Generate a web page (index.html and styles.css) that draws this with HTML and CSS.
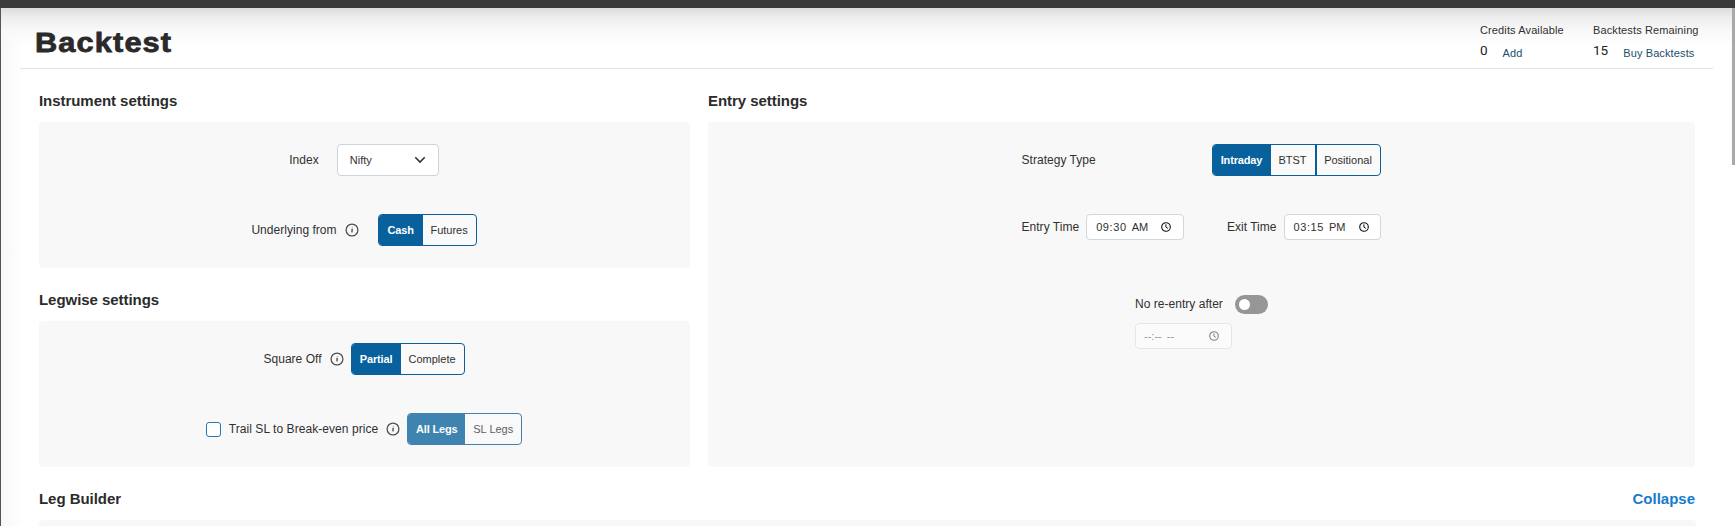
FILE: index.html
```html
<!DOCTYPE html>
<html lang="en">
<head>
<meta charset="utf-8">
<title>Backtest</title>
<link rel="stylesheet" href="styles.css">
</head>
<body>
<svg class="defs" width="0" height="0">
  <symbol id="info" viewBox="0 0 14 14"><circle cx="7" cy="7" r="5.9" fill="none" stroke="#505050" stroke-width="1.3"/><path d="M7.2 5.8L6.9 9.4" stroke="#444" stroke-width="1.3"/><path d="M6.8 4.4h1" stroke="#aaa" stroke-width="1"/></symbol>
  <symbol id="clock" viewBox="0 0 10 10"><circle cx="5" cy="5" r="4.3" fill="none" stroke="#111" stroke-width="1.1"/><path d="M4.9 2.3v2.8l2 1.3" fill="none" stroke="#111" stroke-width="1"/></symbol>
</svg>
<div class="topbar"></div>
<div class="page">
  <header class="header">
    <h1 class="title">Backtest</h1>
    <div class="stats">
      <div class="stat credits"><div class="stat-name">Credits Available</div><div class="stat-row"><span class="num">0</span><a class="link">Add</a></div></div>
      <div class="stat"><div class="stat-name">Backtests Remaining</div><div class="stat-row"><span class="num">15</span><a class="link">Buy Backtests</a></div></div>
    </div>
  </header>
  <main class="main">
    <div class="grid">
      <div class="left">
        <section>
          <h2 class="heading">Instrument settings</h2>
          <div class="panel rows">
            <div class="row"><span class="label">Index</span>
              <div class="select"><span>Nifty</span><svg width="12" height="8" viewBox="0 0 12 8"><path d="M1.3 1.3L6 6l4.7-4.7" fill="none" stroke="#333" stroke-width="1.6"/></svg></div></div>
            <div class="row"><span class="label">Underlying from</span><svg class="info gap-wide"><use href="#info"/></svg>
              <div class="seg"><span class="opt on cash">Cash</span><span class="opt futures">Futures</span></div></div>
          </div>
        </section>
        <section>
          <h2 class="heading">Legwise settings</h2>
          <div class="panel rows">
            <div class="row"><span class="label">Square Off</span><svg class="info"><use href="#info"/></svg>
              <div class="seg"><span class="opt on partial">Partial</span><span class="opt complete">Complete</span></div></div>
            <div class="row"><span class="checkbox"></span><span class="label trail">Trail SL to Break-even price</span><svg class="info"><use href="#info"/></svg>
              <div class="seg disabled"><span class="opt on all-legs">All Legs</span><span class="opt sl-legs">SL Legs</span></div></div>
          </div>
        </section>
      </div>
      <section class="right">
        <h2 class="heading">Entry settings</h2>
        <div class="panel entry">
          <div class="entry-row"><span class="label">Strategy Type</span>
            <div class="seg"><span class="opt on intraday">Intraday</span><span class="opt btst">BTST</span><span class="opt positional">Positional</span></div></div>
          <div class="entry-row times">
            <div class="pair"><span class="label">Entry Time</span><div class="time"><span class="digits">09:30</span><span class="ampm">AM</span><svg class="clock"><use href="#clock"/></svg></div></div>
            <div class="pair"><span class="label">Exit Time</span><div class="time exit"><span class="digits">03:15</span><span class="ampm">PM</span><svg class="clock"><use href="#clock"/></svg></div></div>
          </div>
          <div class="reentry">
            <div class="reentry-row"><span class="label">No re-entry after</span><span class="switch"><span class="knob"></span></span></div>
            <div class="time off"><span class="blank">--:--</span><span class="blank">--</span><svg class="clock"><use href="#clock"/></svg></div>
          </div>
        </div>
      </section>
    </div>
    <div class="builder"><h2 class="heading">Leg Builder</h2><a class="collapse">Collapse</a></div>
    <div class="panel next"></div>
  </main>
  <div class="scroll"></div>
</div>
</body>
</html>
```
FILE: styles.css
```css
* { box-sizing: border-box; }
html, body { height: 100%; }
body { margin: 0; overflow: hidden; background: #fff; color: #303030; font-family: "Liberation Sans", Arial, sans-serif; font-size: 12px; }
.defs { position: absolute; }
.topbar { height: 8px; background: #3a3a3a; }
.page { position: relative; height: 518px; border-left: 1px solid #555; overflow: hidden;
  background: linear-gradient(to bottom, #dcdcdc 0, #ededed 9px, #f8f8f8 22px, rgba(255,255,255,0) 38px), linear-gradient(to right, #f8f8f8 0, #fff 24px); }
.header { display: flex; justify-content: space-between; height: 61px; margin: 0 22px 0 19px; padding: 0 13px 0 15px; border-bottom: 1px solid #e2e2e2; }
.title { margin: 19px 0 0; font-size: 28px; line-height: 32px; font-weight: 700; letter-spacing: 1px; color: #2a2a2a; -webkit-text-stroke: .8px #2a2a2a; transform: scaleX(1.1); transform-origin: left; }
.stats { display: flex; padding-top: 14px; }
.credits { width: 113px; }
.stat { font-size: 11px; line-height: 16px; letter-spacing: .12px; }
.stat:last-child { width: 107px; }
.stat-name { white-space: nowrap; }
.stat-row { display: flex; align-items: baseline; margin-top: 4px; }
.num { font-family: Roboto, sans-serif; font-size: 13.5px; line-height: 17px; letter-spacing: 0; color: #222; margin-right: 15px; }
.link { color: #1b4e6d; position: relative; top: 2px; }
.main { padding: 0 39px 0 38px; }
.grid { display: grid; grid-template-columns: 651px 987px; column-gap: 18px; }
.heading { margin: 0; height: 53px; padding-top: 21px; font-size: 15px; line-height: 22px; font-weight: 700; letter-spacing: -.05px; color: #2b2b2b; white-space: nowrap; }
.panel { background: #f8f8f8; border-radius: 4px; }
.rows { height: 146px; padding: 22px 1px 0 0; display: flex; flex-direction: column; align-items: center; gap: 38px; }
.row { display: flex; align-items: center; height: 32px; }
.label { white-space: nowrap; line-height: 16px; letter-spacing: .03px; }
.row .label { padding-bottom: 1px; }
.select { display: flex; align-items: center; justify-content: space-between; width: 102px; height: 32px; margin-left: 18px; padding: 0 12px; font-size: 11px; background: #fff; border: 1px solid #ccd5dd; border-radius: 4px; }
.info { width: 14px; height: 14px; margin: 0 7px 0 8px; }
.gap-wide { margin-right: 19px; }
.seg { display: flex; height: 32px; border: 1px solid #0b5f99; border-radius: 4px; background: #fafafa; overflow: hidden; }
.opt { display: flex; align-items: center; justify-content: center; font-size: 11px; white-space: nowrap; }
.on { background: #08609c; color: #fff; font-weight: 700; letter-spacing: -.15px; }
.disabled { opacity: .77; }
.cash { width: 44px; }
.futures { width: 53px; }
.partial { width: 49px; }
.complete { width: 63px; }
.all-legs { width: 57px; }
.sl-legs { width: 56px; }
.intraday { width: 58px; }
.btst { width: 46px; border-right: 2px solid #0b5f99; }
.positional { width: 63px; }
.checkbox { width: 15px; height: 15px; margin-right: 8px; border: 1px solid #1f78b8; border-radius: 3px; background: #fff; }
.trail { letter-spacing: .06px; }
.entry { display: flex; flex-direction: column; align-items: center; height: 345px; padding-top: 22px; }
.entry-row { display: flex; align-items: center; justify-content: space-between; width: 360px; height: 32px; padding-right: 1px; }
.times { height: 26px; margin-top: 38px; }
.pair { display: flex; align-items: center; gap: 7px; }
.time { display: flex; align-items: center; width: 98px; height: 26px; padding: 0 12px 0 9px; font-size: 11px; background: #fff; border: 1px solid #d0d7dd; border-radius: 4px; }
.exit { width: 97px; padding-right: 11px; }
.digits { letter-spacing: .6px; margin-right: 5px; }
.clock { width: 10px; height: 10px; margin-left: auto; }
.reentry { width: 133px; margin-top: 54px; }
.reentry-row { display: flex; align-items: center; justify-content: space-between; height: 20px; }
.switch { width: 33px; height: 19px; padding: 4px; border-radius: 10px; background: #969696; }
.knob { display: block; width: 11px; height: 11px; border-radius: 50%; background: #fff; }
.off { margin-top: 9px; width: 97px; padding-left: 8px; opacity: .5; }
.blank { margin-right: 5px; }
.builder { display: flex; justify-content: space-between; padding-right: 1px; }
.collapse { padding-top: 21px; font-size: 15px; line-height: 22px; font-weight: 700; color: #187bcd; }
.next { height: 40px; }
.scroll { position: absolute; right: 0; top: 0; width: 3px; height: 157px; background: #a9a9a9; }
```
